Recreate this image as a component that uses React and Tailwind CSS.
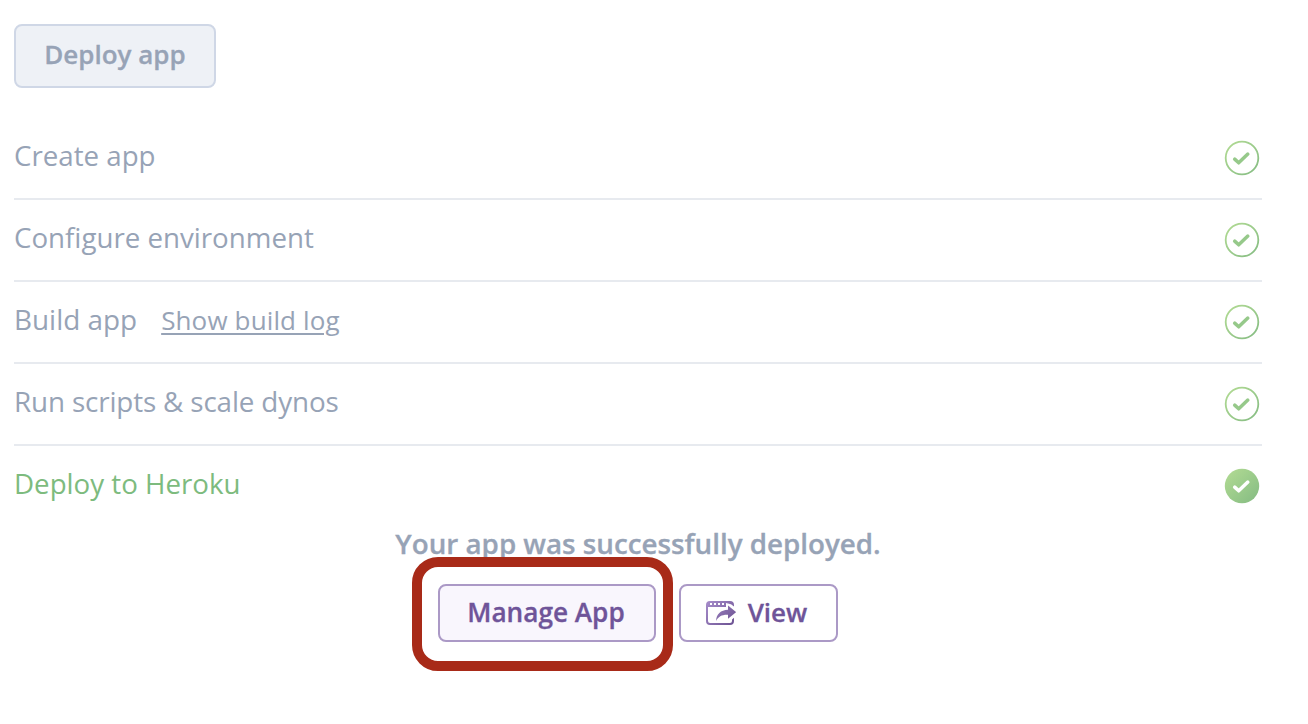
const STEPS = [
  { label: 'Create app', cls: 'text-[27.7px]' },
  { label: 'Configure environment', cls: 'text-[27.7px]' },
  { label: 'Build app', cls: 'text-[27.9px]', link: 'Show build log' },
  { label: 'Run scripts & scale dynos', cls: 'text-[27.8px] tracking-[-0.14px]' },
];

function CheckIcon({ id, filled }) {
  return (
    <svg className="mr-[2px] size-9 shrink-0" viewBox="0 0 36 36" fill="none">
      <defs>
        <linearGradient id={id} x1="4" y1="4" x2="32" y2="32" gradientUnits="userSpaceOnUse">
          <stop stopColor="#afd992" />
          <stop offset="1" stopColor="#88be84" />
        </linearGradient>
      </defs>
      {filled ? (
        <circle cx="18" cy="18" r="17.2" fill={`url(#${id})`} />
      ) : (
        <circle cx="18" cy="18" r="16.3" stroke={`url(#${id})`} strokeWidth="1.8" />
      )}
      <path d="M10.700 19.100 L14.700 22.800 L23.800 14.100" stroke={filled ? '#fff' : '#96c98a'} strokeWidth="3.500" strokeLinecap="round" strokeLinejoin="round" />
    </svg>
  );
}

function ShareWindowIcon() {
  return (
    <svg className="h-6 w-[30px] shrink-0" viewBox="0 0 30 24" fill="none">
      <defs>
        <linearGradient id="share" x1="0" y1="0" x2="26" y2="24" gradientUnits="userSpaceOnUse">
          <stop stopColor="#a78dcb" />
          <stop offset="1" stopColor="#6e5494" />
        </linearGradient>
      </defs>
      <path
        fill="url(#share)"
        fillRule="evenodd"
        d="M4 0H24Q28 0 28 4V5.5L25 3.200L20 2V6H2V20Q2 22 4 22H24Q26 22 26 20V18.500L28 16.700V20Q28 24 24 24H4Q0 24 0 20V4Q0 0 4 0ZM4 2V4H6V2ZM8 2V4H10V2ZM12 2V4H14V2ZM16 2V4H18V2Z"
      />
      <path fill="url(#share)" d="M10 20C10.500 13 14.500 9 22 8.700V4.500L30.200 11.200L22 17.700V13.800C16 13.500 12.500 15.500 10 20Z" />
    </svg>
  );
}

export default function App() {
  return (
    <main className="h-[724px] w-[1308px] overflow-hidden bg-white pt-6 pl-3.5 font-['Open_Sans',sans-serif] text-[#97a3b6]">
      <button className="flex h-16 w-[202px] items-center justify-center rounded-lg border-2 border-[#cfd7e6] bg-[#eef1f6] pb-1 text-[26px] font-semibold [-webkit-text-stroke:0.3px]">
        <span>Deploy app</span>
      </button>
      <ul className="mt-[30px] w-[1248px]">
        {STEPS.map((s, i) => (
          <li key={s.label} className="flex h-[82px] items-center justify-between border-b-2 border-[#e7eaef]">
            <div className="flex items-baseline gap-6 pb-1 text-[28px]">
              <span className={s.cls}>{s.label}</span>
              {s.link && <a className="text-[26px] tracking-[0.14px] underline decoration-2 underline-offset-[3px]">{s.link}</a>}
            </div>
            <CheckIcon id={`step${i}`} />
          </li>
        ))}
        <li className="flex h-20 items-center justify-between">
          <span className="pb-1 text-[27.7px] text-[#7dbb7e]">Deploy to Heroku</span>
          <CheckIcon id="final" filled />
        </li>
      </ul>
      <section className="flex w-[1248px] flex-col items-center">
        <p className="h-[58px] text-[27.75px] leading-[35px] font-semibold [-webkit-text-stroke:0.3px]">
          <span>Your app was successfully deployed.</span>
        </p>
        <div className="flex gap-[23px]">
          <div className="relative">
            <button className="flex h-[58px] w-[218px] items-center justify-center rounded-lg border-2 border-[#ab99c6] bg-[#f9f6fd] pr-0.5 pb-px text-[26.2px] font-semibold text-[#6f5499] [-webkit-text-stroke:0.3px]">
              <span>Manage App</span>
            </button>
            <div className="pointer-events-none absolute -top-[27px] -left-[26px] h-[114px] w-[261px] rounded-[26px] border-[10px] border-[#a82a18]" />
          </div>
          <button className="flex h-[58px] w-[159px] items-center justify-center gap-3 rounded-lg border-2 border-[#ab99c6] bg-white pr-1 pb-px text-[26px] font-semibold text-[#6f5499] [-webkit-text-stroke:0.3px]">
            <ShareWindowIcon />
            <span>View</span>
          </button>
        </div>
      </section>
    </main>
  );
}
